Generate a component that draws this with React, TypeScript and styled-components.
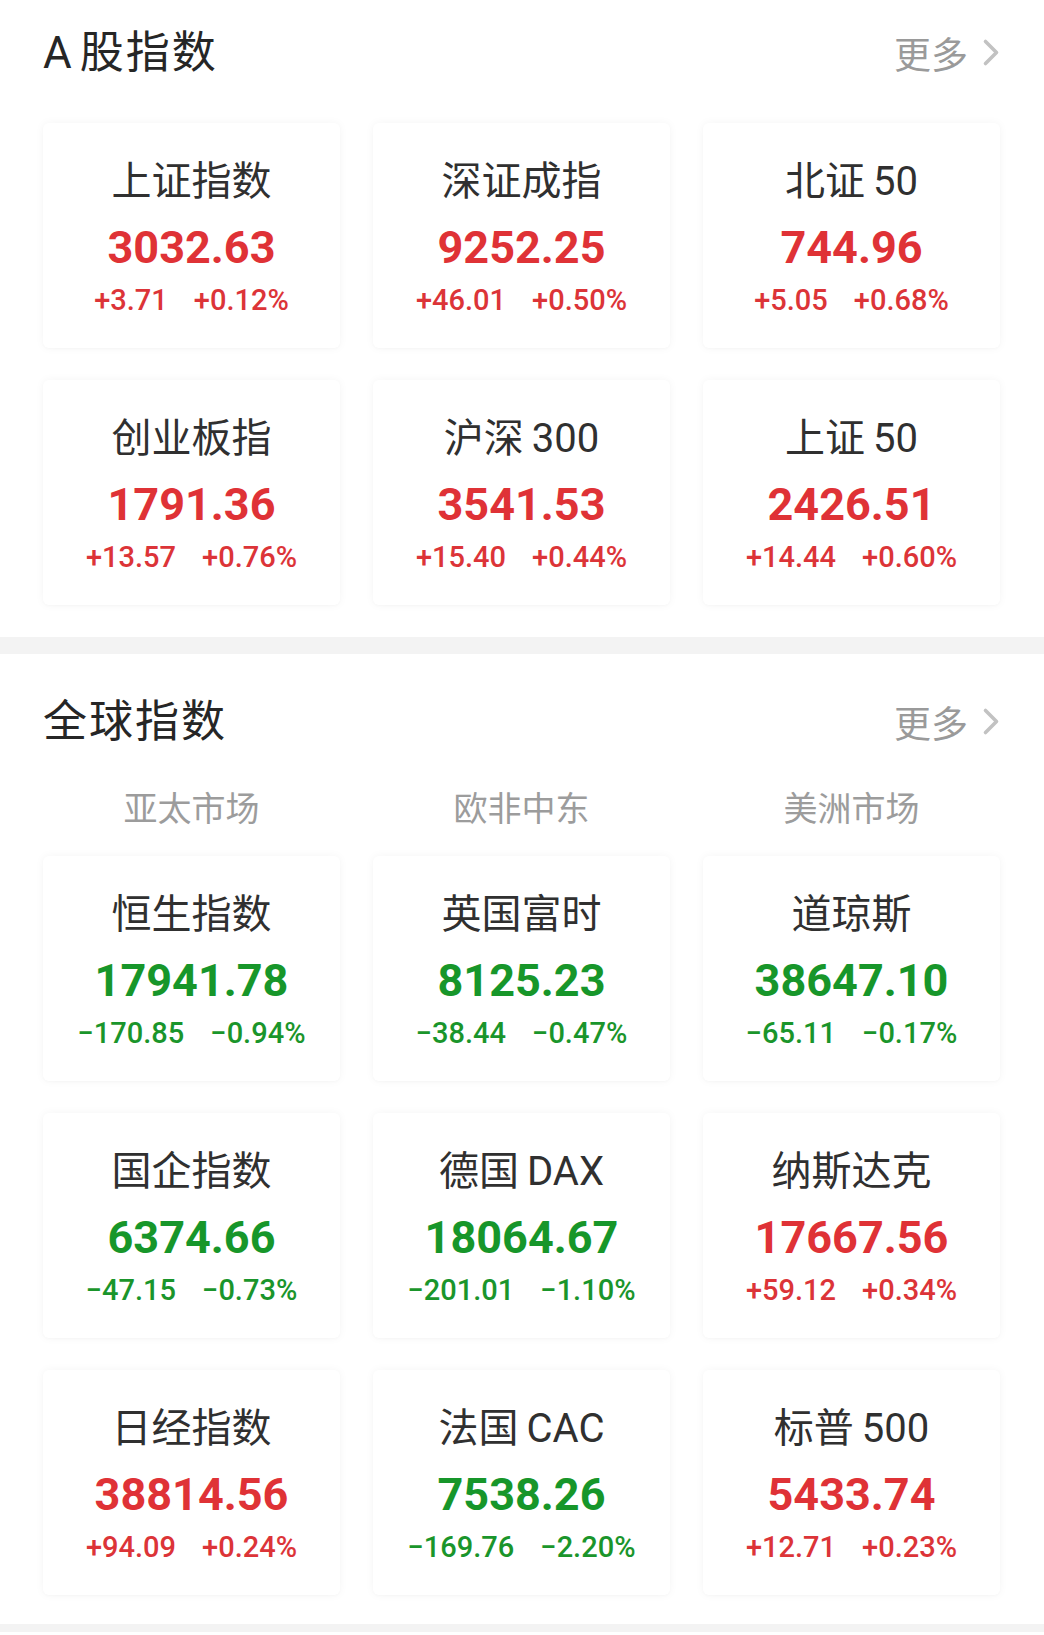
import React from "react";
import styled, { createGlobalStyle } from "styled-components";

const GlobalStyle = createGlobalStyle`
  html, body {
    margin: 0;
    padding: 0;
    background: #ffffff;
  }
  body {
    font-family: Roboto, "Noto Sans CJK SC", sans-serif;
    -webkit-font-smoothing: antialiased;
  }
`;

type Trend = "up" | "down";

interface IndexItem {
  name: string;
  value: string;
  change: string;
  pct: string;
  trend: Trend;
}

const aShares: IndexItem[] = [
  { name: "上证指数", value: "3032.63", change: "+3.71", pct: "+0.12%", trend: "up" },
  { name: "深证成指", value: "9252.25", change: "+46.01", pct: "+0.50%", trend: "up" },
  { name: "北证50", value: "744.96", change: "+5.05", pct: "+0.68%", trend: "up" },
  { name: "创业板指", value: "1791.36", change: "+13.57", pct: "+0.76%", trend: "up" },
  { name: "沪深300", value: "3541.53", change: "+15.40", pct: "+0.44%", trend: "up" },
  { name: "上证50", value: "2426.51", change: "+14.44", pct: "+0.60%", trend: "up" },
];

const globalIdx: IndexItem[] = [
  { name: "恒生指数", value: "17941.78", change: "\u2212170.85", pct: "\u22120.94%", trend: "down" },
  { name: "英国富时", value: "8125.23", change: "\u221238.44", pct: "\u22120.47%", trend: "down" },
  { name: "道琼斯", value: "38647.10", change: "\u221265.11", pct: "\u22120.17%", trend: "down" },
  { name: "国企指数", value: "6374.66", change: "\u221247.15", pct: "\u22120.73%", trend: "down" },
  { name: "德国DAX", value: "18064.67", change: "\u2212201.01", pct: "\u22121.10%", trend: "down" },
  { name: "纳斯达克", value: "17667.56", change: "+59.12", pct: "+0.34%", trend: "up" },
  { name: "日经指数", value: "38814.56", change: "+94.09", pct: "+0.24%", trend: "up" },
  { name: "法国CAC", value: "7538.26", change: "\u2212169.76", pct: "\u22122.20%", trend: "down" },
  { name: "标普500", value: "5433.74", change: "+12.71", pct: "+0.23%", trend: "up" },
];

const markets = ["亚太市场", "欧非中东", "美洲市场"];

const Page = styled.div`
  width: 1044px;
  min-height: 1635px;
  background: #ffffff;
  display: flex;
  flex-direction: column;
`;

const Section = styled.section<{ $top: number }>`
  padding: ${(p) => p.$top}px 43px 0 43px;
  display: flex;
  flex-direction: column;
`;

const Header = styled.div`
  height: 102px;
  padding-top: 3px;
  box-sizing: border-box;
  display: flex;
  align-items: center;
  justify-content: space-between;
`;

const Title = styled.h2`
  margin: 0;
  font-family: Roboto, "Noto Sans CJK SC", sans-serif;
  font-weight: 400;
  font-size: 44px;
  line-height: 50px;
  color: #262626;
  letter-spacing: 2px;
`;

const TitleLatin = styled.span`
  margin-right: 6px;
`;

const More = styled.a`
  display: flex;
  align-items: center;
  gap: 14px;
  margin-right: 1px;
  font-family: "Noto Sans CJK SC", sans-serif;
  font-size: 37px;
  line-height: 44px;
  color: #9a9a9a;
  text-decoration: none;
`;

const Chevron = styled.svg`
  width: 18px;
  height: 29px;
  display: block;
`;

const TabRow = styled.div`
  display: grid;
  grid-template-columns: repeat(3, 297px);
  column-gap: 33px;
  height: 72px;
  align-items: center;
`;

const Tab = styled.div`
  text-align: center;
  font-family: "Noto Sans CJK SC", sans-serif;
  font-size: 34px;
  line-height: 44px;
  color: #9c9c9c;
`;

const Grid = styled.div<{ $top: number }>`
  margin-top: ${(p) => p.$top}px;
  display: grid;
  grid-template-columns: repeat(3, 297px);
  grid-auto-rows: 225px;
  column-gap: 33px;
  row-gap: 32px;
`;

const Card = styled.div`
  background: #ffffff;
  border-radius: 6px;
  box-shadow: 0 0 10px rgba(0, 0, 0, 0.045), 0 1px 3px rgba(0, 0, 0, 0.02);
  display: flex;
  flex-direction: column;
  align-items: center;
  padding-top: 36px;
  box-sizing: border-box;
`;

const CardName = styled.div`
  font-family: Roboto, "Noto Sans CJK SC", sans-serif;
  font-size: 40px;
  line-height: 46px;
  color: #303030;
  white-space: nowrap;
`;

const Latin = styled.span`
  margin-left: 8px;
`;

const Value = styled.div<{ $trend: Trend }>`
  margin-top: 15px;
  font-family: Roboto, sans-serif;
  font-weight: 700;
  font-size: 45px;
  line-height: 56px;
  color: ${(p) => (p.$trend === "up" ? "#df3236" : "#17962a")};
`;

const Changes = styled.div<{ $trend: Trend }>`
  margin-top: 6px;
  display: flex;
  gap: 26px;
  font-family: Roboto, sans-serif;
  font-weight: 500;
  font-size: 29px;
  line-height: 36px;
  color: ${(p) => (p.$trend === "up" ? "#dc3438" : "#1a952b")};
`;

const Divider = styled.div<{ $h: number; $top: number }>`
  margin-top: ${(p) => p.$top}px;
  height: ${(p) => p.$h}px;
  background: #f3f3f3;
`;

function splitName(name: string) {
  const m = name.match(/^([^A-Za-z0-9]+)([A-Za-z0-9]+)$/);
  if (!m) return <>{name}</>;
  return (
    <>
      {m[1]}
      <Latin>{m[2]}</Latin>
    </>
  );
}

function IndexCard({ item }: { item: IndexItem }) {
  return (
    <Card>
      <CardName>{splitName(item.name)}</CardName>
      <Value $trend={item.trend}>{item.value}</Value>
      <Changes $trend={item.trend}>
        <span>{item.change}</span>
        <span>{item.pct}</span>
      </Changes>
    </Card>
  );
}

function MoreLink() {
  return (
    <More href="#">
      更多
      <Chevron viewBox="0 0 18 29">
        <path
          d="M3.5 3.5 L14.5 14.5 L3.5 25.5"
          fill="none"
          stroke="#c2c2c2"
          strokeWidth="3.6"
          strokeLinecap="round"
          strokeLinejoin="round"
        />
      </Chevron>
    </More>
  );
}

export default function App() {
  return (
    <>
      <GlobalStyle />
      <Page>
        <Section $top={0}>
          <Header>
            <Title>
              <TitleLatin>A</TitleLatin>股指数
            </Title>
            <MoreLink />
          </Header>
          <Grid $top={21}>
            {aShares.map((it) => (
              <IndexCard key={it.name} item={it} />
            ))}
          </Grid>
        </Section>
        <Divider $h={17} $top={32} />
        <Section $top={15}>
          <Header>
            <Title>全球指数</Title>
            <MoreLink />
          </Header>
          <TabRow>
            {markets.map((m) => (
              <Tab key={m}>{m}</Tab>
            ))}
          </TabRow>
          <Grid $top={13}>
            {globalIdx.map((it) => (
              <IndexCard key={it.name} item={it} />
            ))}
          </Grid>
        </Section>
        <Divider $h={8} $top={29} />
      </Page>
    </>
  );
}
